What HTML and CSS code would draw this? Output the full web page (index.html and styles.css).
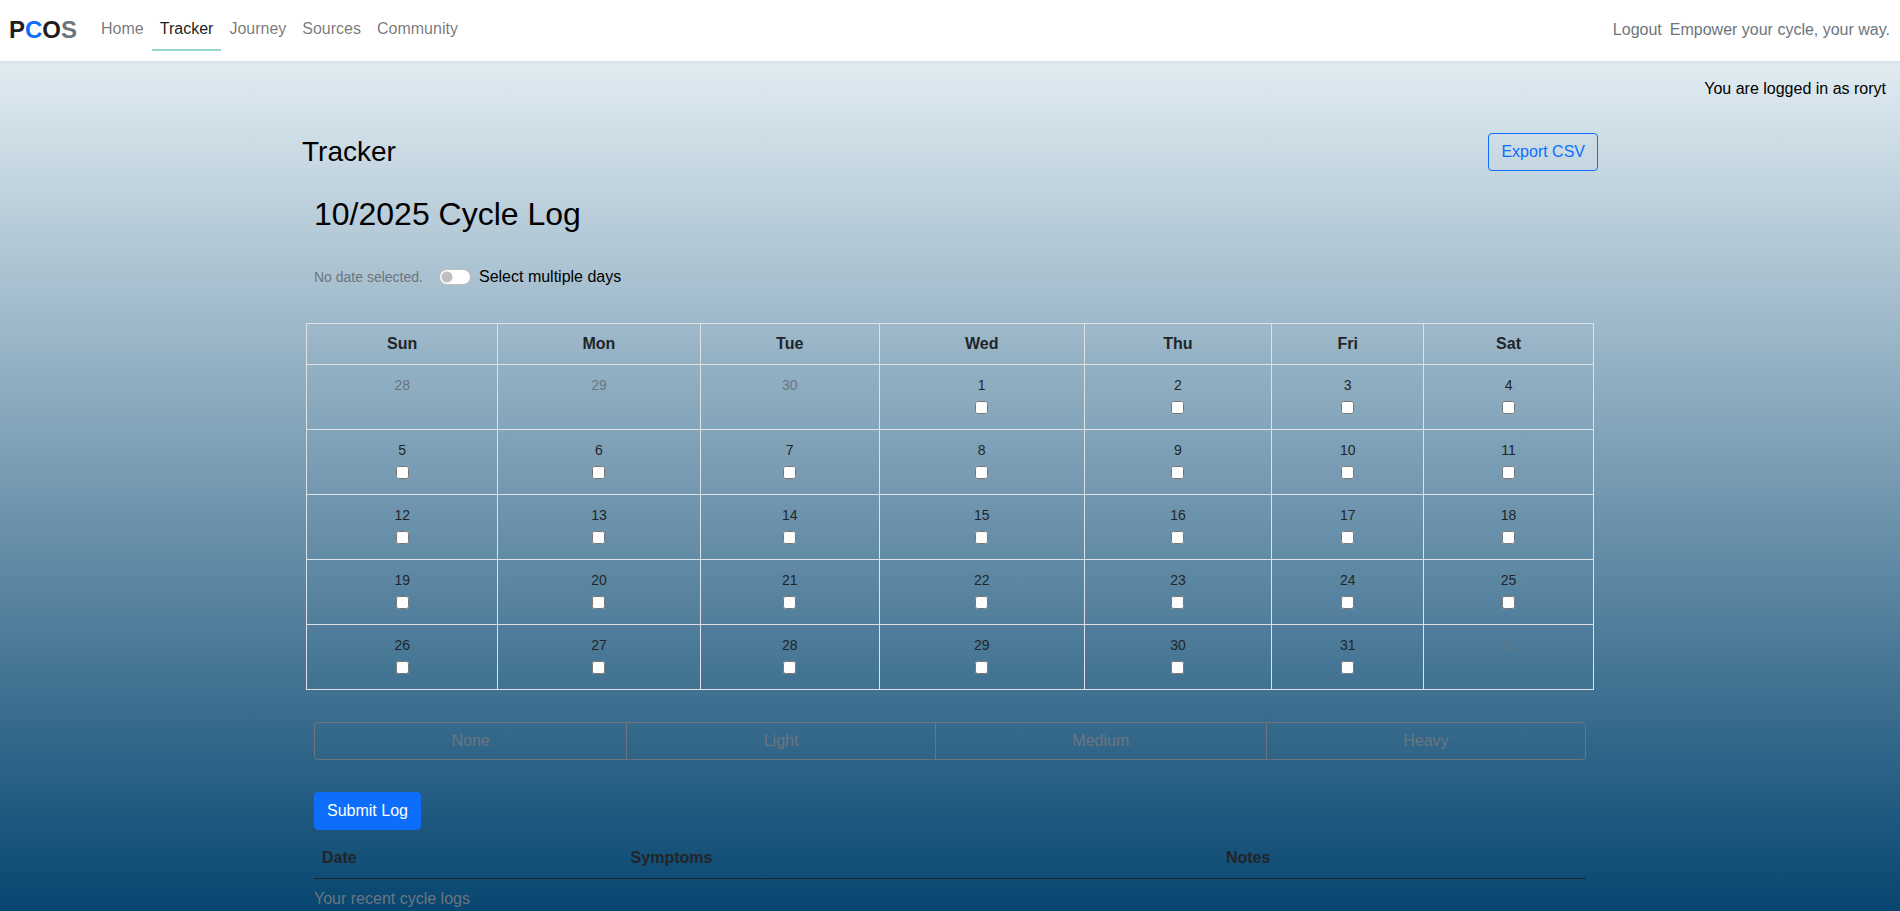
FILE: index.html
```html
<!DOCTYPE html>
<html lang="en">
<head>
<meta charset="utf-8">
<title>Tracker - PCOS</title>
<link rel="stylesheet" href="styles.css">
</head>
<body>
<nav class="navbar">
  <a class="brand" href="#">P<span class="brand-blue">C</span>O<span class="brand-gray">S</span></a>
  <ul class="nav-links">
    <li><a class="nav-link" href="#">Home</a></li>
    <li><a class="nav-link active" href="#" aria-current="page">Tracker</a></li>
    <li><a class="nav-link" href="#">Journey</a></li>
    <li><a class="nav-link" href="#">Sources</a></li>
    <li><a class="nav-link" href="#">Community</a></li>
  </ul>
  <div class="nav-side">
    <a class="logout" href="#">Logout</a>
    <span>Empower your cycle, your way.</span>
  </div>
</nav>
<p class="login-note">You are logged in as roryt</p>
<main class="container">
  <header class="page-head">
    <h1 class="page-title">Tracker</h1>
    <button class="btn btn-outline" type="button">Export CSV</button>
  </header>
  <form class="log-form">
    <h2 class="log-title">10/2025 Cycle Log</h2>
    <div class="select-row">
      <span class="selected-date">No date selected.</span>
      <div class="switch-field">
        <input class="switch" type="checkbox" role="switch" id="multi">
        <label for="multi">Select multiple days</label>
      </div>
    </div>
    <div class="calendar-wrap">
      <table class="calendar">
        <thead>
          <tr><th>Sun</th><th>Mon</th><th>Tue</th><th>Wed</th><th>Thu</th><th>Fri</th><th>Sat</th></tr>
        </thead>
        <tbody id="days"></tbody>
      </table>
    </div>
    <div class="flow-group">
      <button class="flow" type="button">None</button>
      <button class="flow" type="button">Light</button>
      <button class="flow" type="button">Medium</button>
      <button class="flow" type="button">Heavy</button>
    </div>
    <button class="btn btn-primary" type="button">Submit Log</button>
    <table class="logs">
      <thead><tr><th>Date</th><th>Symptoms</th><th>Notes</th></tr></thead>
    </table>
    <p class="logs-note">Your recent cycle logs</p>
  </form>
</main>
<script src="calendar.js"></script>
</body>
</html>
```
FILE: calendar.js
```javascript
// October 2025: the 1st is a Wednesday, so the grid opens on Sunday 28 September.
const body = document.getElementById('days');
for (let week = 0; week < 5; week++) {
  const row = body.insertRow();
  for (let day = 0; day < 7; day++) {
    const date = new Date(2025, 8, 28 + week * 7 + day);
    const cell = row.insertCell();
    const inMonth = date.getMonth() === 9;
    const label = document.createElement(inMonth ? 'label' : 'span');
    label.className = inMonth ? 'day' : 'day day-muted';
    label.textContent = date.getDate();
    cell.append(label);
    if (inMonth) {
      const box = document.createElement('input');
      box.type = 'checkbox';
      box.className = 'day-check';
      box.id = 'day-' + date.getDate();
      label.htmlFor = box.id;
      cell.append(box);
    }
  }
}
```
FILE: styles.css
```css
* { box-sizing: border-box; }

body {
  margin: 0;
  min-height: 100vh;
  font-family: Arial, "Liberation Sans", sans-serif;
  font-size: 16px;
  line-height: 24px;
  color: #000;
  background: linear-gradient(180deg, #f1f8fb, #074670) no-repeat;
}

h1, h2, p, ul { margin: 0; padding: 0; font-weight: normal; }
a { color: inherit; text-decoration: none; }
button, input { font: inherit; }

.navbar {
  display: flex;
  align-items: center;
  padding: 7px 10px 9px 9px;
  background: #fff;
  box-shadow: 0 2px 4px rgba(0, 0, 0, .05);
}
.brand {
  margin-right: 16px;
  padding: 8px 0;
  font-size: 24px;
  line-height: 29px;
  font-weight: bold;
  color: rgba(0, 0, 0, .9);
}
.brand-blue { color: #0d6efd; }
.brand-gray { color: #6c757d; }
.nav-links { display: flex; list-style: none; }
.nav-link {
  display: block;
  padding: 8px;
  border-bottom: 2px solid transparent;
  color: rgba(0, 0, 0, .55);
}
.nav-link.active { color: rgba(0, 0, 0, .9); border-color: #95d5c9; }
.nav-side { display: flex; gap: 8px; margin-left: auto; color: #6c757d; }

.login-note { padding: 16px 14px 0; text-align: right; }

.container { max-width: 1320px; margin: 32px auto 0; padding: 0 12px; }
.page-head { display: flex; align-items: center; justify-content: space-between; }
.page-title { font-size: 28px; line-height: 34px; }

.btn {
  padding: 6px 12px;
  border: 1px solid #0d6efd;
  border-radius: 4px;
  line-height: 24px;
}
.btn-outline { background: transparent; color: #0d6efd; }
.btn-primary { display: block; background: #0d6efd; color: #fff; }

.log-form { padding: 24px 12px 0; }
.log-title { font-size: 32px; line-height: 38px; }
.select-row { display: flex; align-items: center; gap: 16px; margin: 32px 0 34px; }
.selected-date { font-size: 14px; color: #6c757d; }
.switch-field { display: flex; align-items: center; gap: 8px; }
.switch {
  appearance: none;
  width: 32px;
  height: 16px;
  margin: 0;
  border: 1px solid rgba(0, 0, 0, .25);
  border-radius: 16px;
  background: #fff radial-gradient(circle at 7px 7px, #bfbfbf 5px, transparent 6px);
}

.calendar-wrap { margin: 0 -8px; }
.calendar { width: 100%; border-collapse: collapse; color: #212529; text-align: center; }
.calendar th, .calendar td { padding: 8px; border: 1px solid #dee2e6; }
.calendar td { height: 65px; vertical-align: top; }
.day { display: block; font-size: 14px; }
.day-muted { color: #6c757d; }
.day-check { display: block; width: 13px; height: 13px; margin: 4px auto 7px; }

.flow-group { display: flex; margin: 32px 0; }
.flow {
  flex: 1 1 auto;
  padding: 6px 12px;
  border: 1px solid #6c757d;
  background: transparent;
  color: #6c757d;
  line-height: 24px;
}
.flow + .flow { margin-left: -1px; }
.flow:first-child { border-radius: 4px 0 0 4px; }
.flow:last-child { border-radius: 0 4px 4px 0; }

.logs { width: 100%; margin: 8px 0; border-collapse: collapse; color: #212529; text-align: left; }
.logs th { padding: 8px; border-bottom: 1px solid #212529; }
.logs-note { color: #6c757d; }
```
